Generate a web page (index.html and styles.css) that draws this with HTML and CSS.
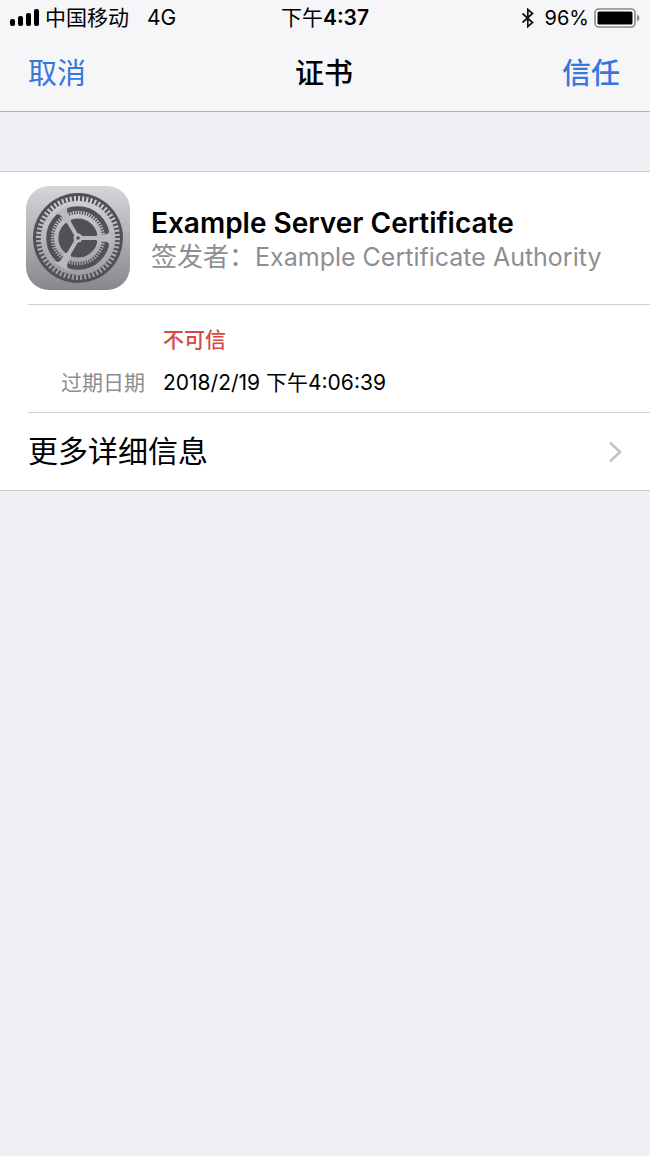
FILE: index.html
```html
<!DOCTYPE html>
<html lang="zh-CN">
<head>
  <meta charset="UTF-8">
  <meta name="viewport" content="width=device-width, initial-scale=1.0">
  <title>证书</title>
  <link rel="stylesheet" href="styles.css">
</head>
<body>
  <header class="top">
    <!-- STATUS BAR -->
    <div class="status">
      <div class="status-left">
        <svg class="signal" width="29" height="18" viewBox="0 0 29 18">
          <rect x="0" y="10" width="5" height="7" rx="2"/>
          <rect x="8" y="7" width="5" height="10" rx="2"/>
          <rect x="16" y="4" width="5" height="13" rx="2"/>
          <rect x="24" y="0" width="5" height="17" rx="2"/>
        </svg>
        <span class="carrier">中国移动</span>
        <span>4G</span>
      </div>
      <div class="status-time">下午<span class="clock">4:37</span></div>
      <div class="status-right">
        <svg width="14" height="20" viewBox="0 0 14 20">
          <path d="M1.5 5.5L11.5 14.5L6.8 18.6V1.4L11.5 5.5L1.5 14.5" fill="none" stroke="#111" stroke-width="1.7"/>
        </svg>
        <span class="percent">96%</span>
        <svg width="46" height="20" viewBox="0 0 46 20">
          <rect x="1" y="1" width="40" height="18" rx="4" fill="#fff" stroke="#858587" stroke-width="1.6"/>
          <rect x="3.5" y="3.5" width="35" height="13" rx="1.5" fill="#000"/>
          <path d="M43 6.5Q45.5 8 45.5 10T43 13.5Z" fill="#858587"/>
        </svg>
      </div>
    </div>

    <!-- NAVIGATION -->
    <nav class="nav">
      <button class="nav-btn" type="button">取消</button>
      <h1 class="nav-title">证书</h1>
      <button class="nav-btn nav-trust" type="button">信任</button>
    </nav>
  </header>

  <main class="group">
    <section class="cert">
      <svg class="cert-icon" width="104" height="104" viewBox="0 0 104 104">
        <defs>
          <linearGradient id="plate" x1="0" y1="0" x2="0" y2="1">
            <stop offset="0" stop-color="#d5d6d9"/>
            <stop offset="1" stop-color="#87888d"/>
          </linearGradient>
          <linearGradient id="metal" gradientUnits="userSpaceOnUse" x1="0" y1="8" x2="0" y2="96">
            <stop offset="0" stop-color="#d2d3d6"/>
            <stop offset="1" stop-color="#999a9f"/>
          </linearGradient>
        </defs>
        <rect width="104" height="104" rx="23" fill="url(#plate)"/>
        <circle cx="52" cy="52" r="45" fill="#505154"/>
        <g fill="none" stroke="url(#metal)">
          <!-- outer gear -->
          <circle cx="52" cy="52" r="39.5" stroke-width="5" pathLength="120" stroke-dasharray="1 1"/>
          <circle cx="52" cy="52" r="34.5" stroke-width="5.5"/>
          <!-- inner gear -->
          <circle cx="52" cy="52" r="25.5" stroke-width="3.5" pathLength="120" stroke-dasharray="1 1"/>
          <circle cx="52" cy="52" r="21.8" stroke-width="4.4"/>
        </g>
        <!-- spokes -->
        <g fill="#b9babd">
          <path d="M52 50H70L72 48.5H79Q83 48 85 43V61Q83 56 79 55.5H72L70 54H52Z"/>
          <path d="M52 50H70L72 48.5H79Q83 48 85 43V61Q83 56 79 55.5H72L70 54H52Z" transform="rotate(120 52 52)"/>
          <path d="M52 50H70L72 48.5H79Q83 48 85 43V61Q83 56 79 55.5H72L70 54H52Z" transform="rotate(240 52 52)"/>
          <circle cx="52" cy="52" r="4.5"/>
        </g>
        <circle cx="52" cy="52" r="1.8" fill="#505154"/>
      </svg>
      <div class="cert-text">
        <h2 class="cert-name">Example Server Certificate</h2>
        <p class="cert-issuer"><span class="issuer-label">签发者：</span>Example Certificate Authority</p>
      </div>
    </section>

    <dl class="details">
      <dt></dt>
      <dd class="untrusted">不可信</dd>
      <dt>过期日期</dt>
      <dd>2018/2/19 下午4:06:39</dd>
    </dl>

    <a class="more" href="#">
      <span class="more-label">更多详细信息</span>
      <svg width="14" height="22" viewBox="0 0 14 22">
        <path d="M2 1.5L12 11L2 20.5" fill="none" stroke="#c3c3c7" stroke-width="2.6"/>
      </svg>
    </a>
  </main>
</body>
</html>
```
FILE: styles.css
```css
* {
  box-sizing: border-box;
}

body {
  margin: 0;
  min-height: 100vh;
  background: #efeff4;
  color: #000;
  font-family: Inter, "Noto Sans CJK SC", sans-serif;
}

h1, h2, p, dl, dd {
  margin: 0;
}

svg {
  display: block;
  flex: none;
}

/* HEADER */
.top {
  background: #f6f6f8;
  border-bottom: 1px solid #b2b2b6;
}

.status {
  display: grid;
  grid-template-columns: 1fr auto 1fr;
  align-items: center;
  height: 36px;
  padding: 0 10px;
  font-size: 21px;
  line-height: 36px;
}

.status-left,
.status-right {
  display: flex;
  align-items: center;
}

.carrier {
  margin: 0 18px 0 6px;
}

.clock {
  font-weight: 600;
}

.status-right {
  justify-content: flex-end;
}

.percent {
  margin: 0 5px 0 10px;
  font-size: 20px;
}

.nav {
  display: grid;
  grid-template-columns: 1fr auto 1fr;
  align-items: center;
  height: 75px;
  padding: 0 30px 5px 28px;
}

.nav-btn {
  padding: 0;
  border: none;
  background: none;
  color: #3578dc;
  font-family: inherit;
  font-size: 29px;
  cursor: pointer;
  justify-self: start;
}

.nav-trust {
  justify-self: end;
  font-weight: 500;
}

.nav-title {
  font-size: 29px;
  font-weight: 500;
}

/* CERTIFICATE */
.group {
  margin-top: 59px;
  padding-left: 28px;
  background: #fff;
  border-top: 1px solid #d0d0d4;
  border-bottom: 1px solid #d0d0d4;
}

.cert {
  display: flex;
  align-items: center;
  gap: 21px;
  height: 132px;
  margin-left: -2px;
}

.cert-text {
  padding-top: 3px;
}

.cert-name {
  font-size: 28px;
  font-weight: 600;
  line-height: 34px;
}

.cert-issuer {
  color: #8e8e93;
  font-size: 25px;
  line-height: 34px;
}

.issuer-label {
  font-size: 26px;
}

.details {
  display: grid;
  grid-template-columns: 117px 1fr;
  column-gap: 18px;
  padding: 13px 0 8px;
  border-top: 1px solid #d0d0d4;
  border-bottom: 1px solid #d0d0d4;
  font-size: 21px;
  line-height: 43px;
}

.details dt {
  color: #8e8e93;
  text-align: right;
}

.untrusted {
  color: #d64a44;
  font-weight: 500;
}

.more {
  display: flex;
  align-items: center;
  justify-content: space-between;
  height: 77px;
  padding-right: 28px;
  color: #000;
  font-size: 30px;
  text-decoration: none;
}

.more-label {
  padding-bottom: 5px;
}
```
